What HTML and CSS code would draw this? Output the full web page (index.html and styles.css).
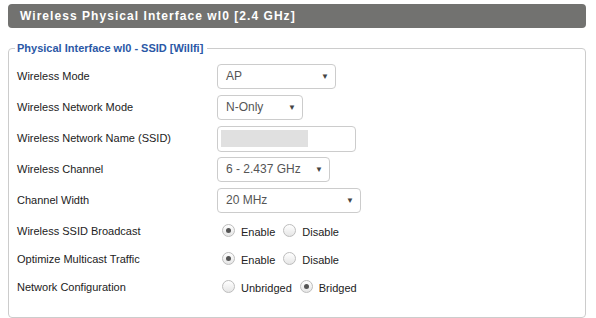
FILE: index.html
```html
<!DOCTYPE html>
<html lang="en">
<head>
  <meta charset="UTF-8">
  <title>Wireless Physical Interface</title>
  <link rel="stylesheet" href="styles.css">
</head>
<body>
  <div class="page">
    <h2 class="section-title">Wireless Physical Interface wl0 [2.4 GHz]</h2>
    <fieldset class="panel">
      <legend>Physical Interface wl0 - SSID [Willfi]</legend>

      <div class="row">
        <div class="label">Wireless Mode</div>
        <div class="field"><div class="select w-mode">AP<span class="arrow">&#9660;</span></div></div>
      </div>
      <div class="row">
        <div class="label">Wireless Network Mode</div>
        <div class="field"><div class="select w-netmode">N-Only<span class="arrow">&#9660;</span></div></div>
      </div>
      <div class="row">
        <div class="label">Wireless Network Name (SSID)</div>
        <div class="field"><div class="text-input"><span class="masked"></span></div></div>
      </div>
      <div class="row">
        <div class="label">Wireless Channel</div>
        <div class="field"><div class="select w-channel">6 - 2.437 GHz<span class="arrow">&#9660;</span></div></div>
      </div>
      <div class="row">
        <div class="label">Channel Width</div>
        <div class="field"><div class="select w-width">20 MHz<span class="arrow">&#9660;</span></div></div>
      </div>
      <div class="row radio-row first-radio">
        <div class="label">Wireless SSID Broadcast</div>
        <div class="field radios">
          <span class="radio checked"></span><span class="opt">Enable</span>
          <span class="radio"></span><span class="opt">Disable</span>
        </div>
      </div>
      <div class="row radio-row">
        <div class="label">Optimize Multicast Traffic</div>
        <div class="field radios">
          <span class="radio checked"></span><span class="opt">Enable</span>
          <span class="radio"></span><span class="opt">Disable</span>
        </div>
      </div>
      <div class="row radio-row">
        <div class="label">Network Configuration</div>
        <div class="field radios">
          <span class="radio"></span><span class="opt">Unbridged</span>
          <span class="radio checked"></span><span class="opt">Bridged</span>
        </div>
      </div>
    </fieldset>
  </div>
</body>
</html>
```
FILE: styles.css
```css
body {
  margin: 4px 10px 0 8px;
  font-family: "Liberation Sans", Arial, sans-serif;
  background: #fff;
  color: #222;
}
.page {
  width: 578px;
}
.section-title {
  margin: 0;
  height: 24px;
  line-height: 24px;
  padding: 0 12px;
  background: #727270;
  color: #fff;
  border-radius: 4px;
  font-size: 12px;
  font-weight: bold;
  letter-spacing: 1.05px;
}
.panel {
  margin: 14px 0 0 0;
  padding: 7px 8px 15px 8px;
  border: 1px solid #ccc;
  border-radius: 4px;
}
.panel legend {
  padding: 0 4px 0 2px;
  margin-left: -2px;
  color: #2b58a6;
  font-size: 11px;
  font-weight: bold;
}
.row {
  display: flex;
  align-items: center;
  height: 31px;
  font-size: 11px;
}
.row.radio-row {
  height: 28px;
}
.row.first-radio {
  margin-top: 2px;
}
.label {
  width: 200px;
  padding-bottom: 2px;
}
.field {
  display: flex;
  align-items: center;
}
.select {
  position: relative;
  height: 23px;
  line-height: 23px;
  padding-left: 8px;
  border: 1px solid #ccc;
  border-radius: 4px;
  font-size: 12px;
  color: #555;
  background: #fff;
  box-sizing: content-box;
}
.select .arrow {
  position: absolute;
  right: 6px;
  top: 0;
  font-size: 8px;
  color: #444;
}
.w-mode { width: 109px; }
.w-netmode { width: 76px; }
.w-channel { width: 103px; }
.w-width { width: 134px; }
.text-input {
  width: 134px;
  height: 24px;
  border: 1px solid #ccc;
  border-radius: 4px;
  display: flex;
  align-items: center;
  padding-left: 3px;
}
.masked {
  display: block;
  width: 87px;
  height: 17px;
  background: #e0e0e0;
}
.radios {
  padding-left: 5px;
  font-size: 11px;
}
.radio {
  display: inline-block;
  width: 11px;
  height: 11px;
  border: 1px solid #bdbdbd;
  border-radius: 50%;
  background: linear-gradient(#fff, #e6e6e6);
  position: relative;
  margin-right: 6px;
  margin-top: -3px;
}
.radio.checked::after {
  content: "";
  position: absolute;
  left: 3px;
  top: 3px;
  width: 5px;
  height: 5px;
  border-radius: 50%;
  background: #555;
}
.opt {
  margin-right: 8px;
}
```
